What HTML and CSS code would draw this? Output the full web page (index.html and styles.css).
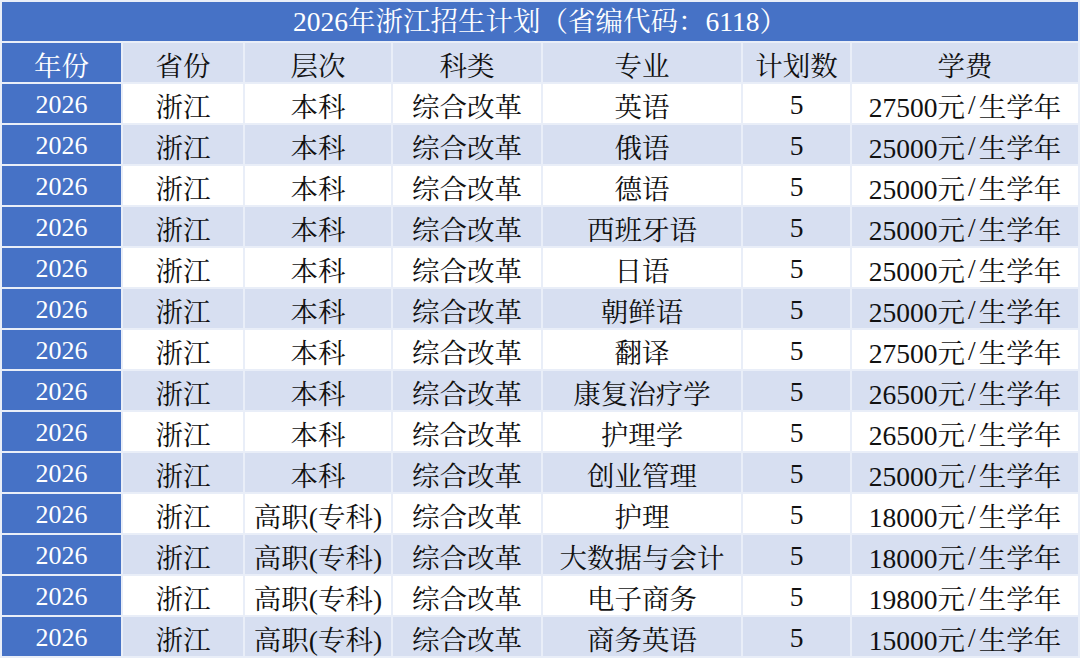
FILE: index.html
```html
<!DOCTYPE html>
<html lang="zh-CN">
<head>
<meta charset="utf-8">
<title>2026年浙江招生计划</title>
<link rel="stylesheet" href="styles.css">
</head>
<body>
<div class="sheet">
  <div class="title">2026年浙江招生计划（省编代码：6118）</div>
  <div class="grid">
    <div class="c h year">年份</div><div class="c h">省份</div><div class="c h">层次</div><div class="c h">科类</div><div class="c h">专业</div><div class="c h">计划数</div><div class="c h">学费</div>

    <div class="c year">2026</div><div class="c">浙江</div><div class="c">本科</div><div class="c">综合改革</div><div class="c">英语</div><div class="c">5</div><div class="c">27500元<span class="sl">/</span>生学年</div>
    <div class="c year">2026</div><div class="c alt">浙江</div><div class="c alt">本科</div><div class="c alt">综合改革</div><div class="c alt">俄语</div><div class="c alt">5</div><div class="c alt">25000元<span class="sl">/</span>生学年</div>
    <div class="c year">2026</div><div class="c">浙江</div><div class="c">本科</div><div class="c">综合改革</div><div class="c">德语</div><div class="c">5</div><div class="c">25000元<span class="sl">/</span>生学年</div>
    <div class="c year">2026</div><div class="c alt">浙江</div><div class="c alt">本科</div><div class="c alt">综合改革</div><div class="c alt">西班牙语</div><div class="c alt">5</div><div class="c alt">25000元<span class="sl">/</span>生学年</div>
    <div class="c year">2026</div><div class="c">浙江</div><div class="c">本科</div><div class="c">综合改革</div><div class="c">日语</div><div class="c">5</div><div class="c">25000元<span class="sl">/</span>生学年</div>
    <div class="c year">2026</div><div class="c alt">浙江</div><div class="c alt">本科</div><div class="c alt">综合改革</div><div class="c alt">朝鲜语</div><div class="c alt">5</div><div class="c alt">25000元<span class="sl">/</span>生学年</div>
    <div class="c year">2026</div><div class="c">浙江</div><div class="c">本科</div><div class="c">综合改革</div><div class="c">翻译</div><div class="c">5</div><div class="c">27500元<span class="sl">/</span>生学年</div>
    <div class="c year">2026</div><div class="c alt">浙江</div><div class="c alt">本科</div><div class="c alt">综合改革</div><div class="c alt">康复治疗学</div><div class="c alt">5</div><div class="c alt">26500元<span class="sl">/</span>生学年</div>
    <div class="c year">2026</div><div class="c">浙江</div><div class="c">本科</div><div class="c">综合改革</div><div class="c">护理学</div><div class="c">5</div><div class="c">26500元<span class="sl">/</span>生学年</div>
    <div class="c year">2026</div><div class="c alt">浙江</div><div class="c alt">本科</div><div class="c alt">综合改革</div><div class="c alt">创业管理</div><div class="c alt">5</div><div class="c alt">25000元<span class="sl">/</span>生学年</div>
    <div class="c year">2026</div><div class="c">浙江</div><div class="c">高职(专科)</div><div class="c">综合改革</div><div class="c">护理</div><div class="c">5</div><div class="c">18000元<span class="sl">/</span>生学年</div>
    <div class="c year">2026</div><div class="c alt">浙江</div><div class="c alt">高职(专科)</div><div class="c alt">综合改革</div><div class="c alt">大数据与会计</div><div class="c alt">5</div><div class="c alt">18000元<span class="sl">/</span>生学年</div>
    <div class="c year">2026</div><div class="c">浙江</div><div class="c">高职(专科)</div><div class="c">综合改革</div><div class="c">电子商务</div><div class="c">5</div><div class="c">19800元<span class="sl">/</span>生学年</div>
    <div class="c year">2026</div><div class="c alt">浙江</div><div class="c alt">高职(专科)</div><div class="c alt">综合改革</div><div class="c alt">商务英语</div><div class="c alt">5</div><div class="c alt">15000元<span class="sl">/</span>生学年</div>
  </div>
</div>
</body>
</html>
```

FILE: styles.css
```css
html, body {
  margin: 0;
  padding: 0;
  background: #ffffff;
}
body {
  width: 1080px;
  height: 661px;
  overflow: hidden;
  font-family: "Liberation Serif", "Noto Serif CJK SC", "Noto Sans CJK SC", serif;
  color: #111111;
}
.sheet {
  background: #e9eef8;
  padding: 2px 2px 2px 2px;
  display: flex;
  flex-direction: column;
  gap: 2px;
}
.title {
  height: 39px;
  background: #4672c6;
  color: #ffffff;
  font-size: 27.5px;
  line-height: 39px;
  text-align: center;
}
.grid {
  display: grid;
  grid-template-columns: 119px 120px 146px 148px 198px 107px 226px;
  grid-auto-rows: 39px;
  gap: 2px;
}
.c {
  background: #ffffff;
  display: flex;
  align-items: center;
  justify-content: center;
  font-size: 27.5px;
  padding-top: 2px;
  box-sizing: border-box;
  white-space: nowrap;
}
.c.alt {
  background: #d7dff1;
}
.c.h {
  background: #d7dff1;
}
.c.year {
  background: #4672c6;
  color: #ffffff;
  font-size: 26px;
}
.c.h.year {
  font-size: 27.5px;
}
.sl {
  padding: 0 3px;
}
```
